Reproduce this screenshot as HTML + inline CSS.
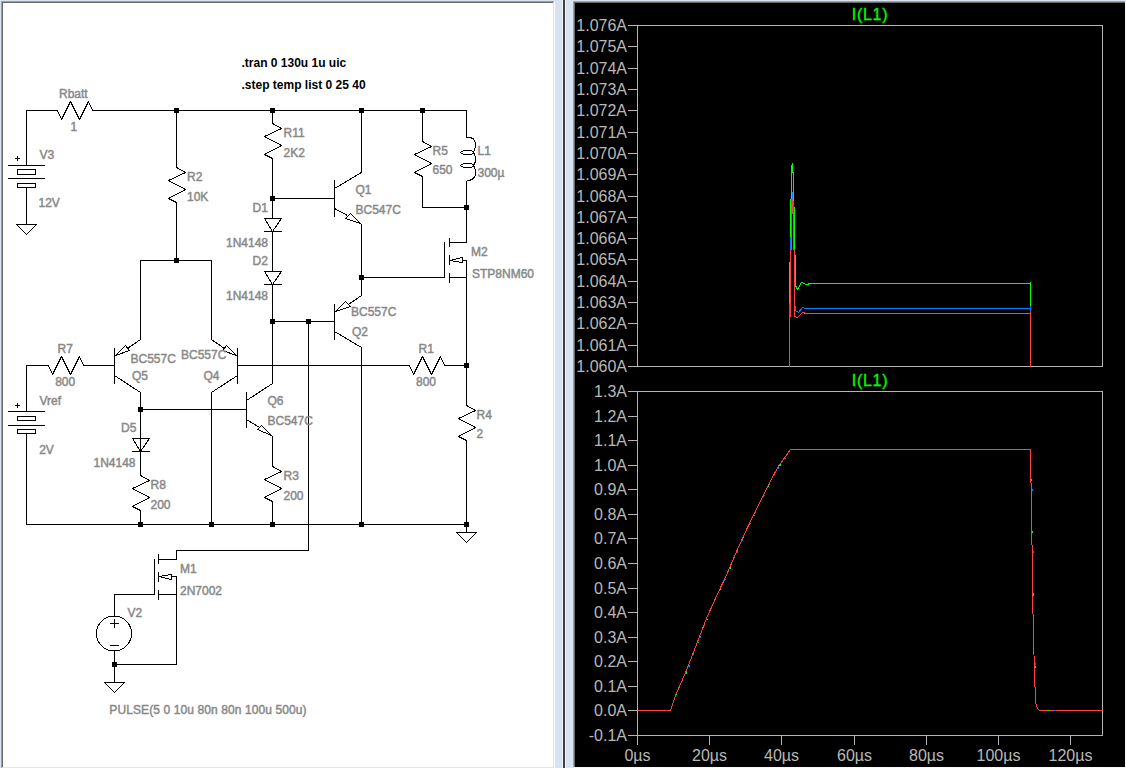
<!DOCTYPE html>
<html><head><meta charset="utf-8"><style>
html,body{margin:0;padding:0;width:1126px;height:768px;overflow:hidden;background:#d6e3f1;}
svg{position:absolute;left:0;top:0;display:block}
.lbl{font-family:"Liberation Sans",sans-serif;font-size:12px;fill:#888;stroke:#888;stroke-width:0.45px;}
.dir{font-family:"Liberation Sans",sans-serif;font-size:12px;font-weight:bold;fill:#000;}
.ax{font-family:"Liberation Sans",sans-serif;font-size:16px;fill:#b8b8b8;}
.ttl{font-family:"Liberation Sans",sans-serif;font-size:16px;fill:#00ff00;stroke:#00ff00;stroke-width:0.3px;letter-spacing:0.7px;}
</style></head><body>
<svg width="1126" height="768" viewBox="0 0 1126 768">
<defs><clipPath id="clipTop"><rect x="638" y="26" width="464" height="341"/></clipPath></defs>
<rect x="0" y="0" width="1126" height="768" fill="#d6e3f1"/>
<!-- left panel -->
<rect x="1" y="1" width="554" height="767" fill="#ffffff"/>
<rect x="1" y="1" width="553" height="1" fill="#a0a0a0"/>
<rect x="1" y="1" width="1" height="767" fill="#a0a0a0"/>
<rect x="2" y="2" width="552" height="766" fill="#e3e3e3"/>
<rect x="2" y="2" width="551" height="1" fill="#696969"/>
<rect x="2" y="2" width="1" height="765" fill="#696969"/>
<rect x="3" y="3" width="550" height="764" fill="#ffffff"/>
<!-- divider -->
<rect x="562" y="0" width="1" height="768" fill="#eef4fd"/>
<rect x="563" y="0" width="2" height="768" fill="#404040"/>
<rect x="565" y="0" width="1" height="768" fill="#eef4fd"/>
<!-- right panel -->
<rect x="573" y="1" width="553" height="767" fill="#f8f8f8"/>
<rect x="573" y="1" width="552" height="766" fill="#a0a0a0"/>
<rect x="574" y="2" width="551" height="765" fill="#696969"/>
<rect x="575" y="3" width="550" height="764" fill="#000000"/>
<g shape-rendering="crispEdges">
<rect x="26" y="110" width="1" height="56" fill="#000"/>
<rect x="26" y="110" width="32" height="1" fill="#000"/>
<path d="M57.5 110.5 L61.5 119.5 L70.5 101.5 L79.5 119.5 L88.5 101.5 L92.5 110.5" stroke="#000" fill="none" stroke-linejoin="bevel"/>
<rect x="92" y="110" width="375" height="1" fill="#000"/>
<rect x="174" y="108" width="5" height="5" fill="#000"/>
<rect x="270" y="108" width="5" height="5" fill="#000"/>
<rect x="359" y="108" width="5" height="5" fill="#000"/>
<rect x="420" y="108" width="5" height="5" fill="#000"/>
<rect x="8" y="165" width="37" height="1" fill="#000"/>
<rect x="17.5" y="169.5" width="18" height="5" fill="none" stroke="#000"/>
<rect x="8" y="178" width="37" height="1" fill="#000"/>
<rect x="17.5" y="183.5" width="18" height="4" fill="none" stroke="#000"/>
<rect x="15" y="158" width="5" height="1" fill="#000"/>
<rect x="17" y="156" width="1" height="5" fill="#000"/>
<rect x="26" y="188" width="1" height="37" fill="#000"/>
<path d="M16.5 224.5 L36.5 224.5 L26.5 234.5 Z" stroke="#000" fill="none" stroke-linejoin="bevel"/>
<rect x="176" y="110" width="1" height="58" fill="#000"/>
<path d="M176.5 167.5 L185.5 172.5 L168.5 180.5 L185.5 189.5 L168.5 198.5 L176.5 202.5" stroke="#000" fill="none" stroke-linejoin="bevel"/>
<rect x="176" y="202" width="1" height="59" fill="#000"/>
<rect x="174" y="258" width="5" height="5" fill="#000"/>
<rect x="140" y="260" width="72" height="1" fill="#000"/>
<rect x="140" y="260" width="1" height="80" fill="#000"/>
<rect x="211" y="260" width="1" height="80" fill="#000"/>
<rect x="272" y="110" width="1" height="14" fill="#000"/>
<path d="M272.5 123.5 L281.5 128.5 L264.5 136.5 L281.5 145.5 L264.5 154.5 L272.5 158.5" stroke="#000" fill="none" stroke-linejoin="bevel"/>
<rect x="272" y="158" width="1" height="61" fill="#000"/>
<rect x="270" y="196" width="5" height="5" fill="#000"/>
<rect x="272" y="198" width="63" height="1" fill="#000"/>
<rect x="264" y="218" width="18" height="1" fill="#000"/>
<path d="M264.5 218.5 L272.5 231.5" stroke="#000" fill="none" stroke-linejoin="bevel"/>
<path d="M281.5 218.5 L272.5 231.5" stroke="#000" fill="none" stroke-linejoin="bevel"/>
<rect x="264" y="231" width="18" height="1" fill="#000"/>
<rect x="272" y="231" width="1" height="41" fill="#000"/>
<rect x="264" y="271" width="18" height="1" fill="#000"/>
<path d="M264.5 271.5 L272.5 284.5" stroke="#000" fill="none" stroke-linejoin="bevel"/>
<path d="M281.5 271.5 L272.5 284.5" stroke="#000" fill="none" stroke-linejoin="bevel"/>
<rect x="264" y="284" width="18" height="1" fill="#000"/>
<rect x="272" y="284" width="1" height="100" fill="#000"/>
<rect x="270" y="319" width="5" height="5" fill="#000"/>
<rect x="272" y="321" width="63" height="1" fill="#000"/>
<rect x="306" y="319" width="5" height="5" fill="#000"/>
<rect x="308" y="321" width="1" height="230" fill="#000"/>
<rect x="176" y="550" width="133" height="1" fill="#000"/>
<rect x="334" y="180" width="1" height="37" fill="#000"/>
<path d="M334.5 188.5 L361.5 172.5" stroke="#000" fill="none" stroke-linejoin="bevel"/>
<rect x="361" y="110" width="1" height="63" fill="#000"/>
<path d="M334.5 208.5 L347.5 215.5" stroke="#000" fill="none" stroke-linejoin="bevel"/>
<path d="M350.5 213.5 L345.5 218.5 L360.5 223.5 Z" stroke="#000" fill="none" stroke-linejoin="bevel"/>
<path d="M360.5 223.5 L361.5 224.5" stroke="#000" fill="none" stroke-linejoin="bevel"/>
<rect x="361" y="224" width="1" height="72" fill="#000"/>
<rect x="359" y="275" width="5" height="5" fill="#000"/>
<rect x="361" y="277" width="84" height="1" fill="#000"/>
<rect x="334" y="304" width="1" height="36" fill="#000"/>
<path d="M348.5 304.5 L361.5 295.5" stroke="#000" fill="none" stroke-linejoin="bevel"/>
<path d="M335.5 311.5 L345.5 301.5 L350.5 306.5 Z" stroke="#000" fill="none" stroke-linejoin="bevel"/>
<path d="M334.5 331.5 L361.5 347.5" stroke="#000" fill="none" stroke-linejoin="bevel"/>
<rect x="361" y="347" width="1" height="178" fill="#000"/>
<rect x="422" y="110" width="1" height="32" fill="#000"/>
<path d="M422.5 141.5 L431.5 146.5 L414.5 154.5 L431.5 163.5 L414.5 172.5 L422.5 176.5" stroke="#000" fill="none" stroke-linejoin="bevel"/>
<rect x="422" y="176" width="1" height="32" fill="#000"/>
<rect x="422" y="207" width="45" height="1" fill="#000"/>
<rect x="464" y="205" width="5" height="5" fill="#000"/>
<rect x="466" y="110" width="1" height="28" fill="#000"/>
<path d="M466.5 137 C471 137 475.5 139 475.5 144.5 C475.5 148 474.5 150.5 473.5 152.5 C475.5 155 475.5 158 475.5 160 C475.5 162.5 474.5 164 473.5 165.5 C475.5 168 475.5 171 475.5 173 C475.5 178.5 471 180.5 466.5 180.5" stroke="#000" fill="none"/>
<path d="M473.5 152.5 L471.5 150.5 L463.5 150.5 L460.5 152.5 L463.5 154.5 L471.5 154.5 L473.5 152.5" stroke="#000" fill="none" stroke-linejoin="bevel"/>
<path d="M473.5 165.5 L471.5 163.5 L463.5 163.5 L460.5 165.5 L463.5 167.5 L471.5 167.5 L473.5 165.5" stroke="#000" fill="none" stroke-linejoin="bevel"/>
<rect x="466" y="181" width="1" height="62" fill="#000"/>
<rect x="449" y="242" width="18" height="1" fill="#000"/>
<rect x="444" y="242" width="1" height="36" fill="#000"/>
<rect x="449" y="238" width="1" height="9" fill="#000"/>
<rect x="449" y="255" width="1" height="10" fill="#000"/>
<rect x="449" y="273" width="1" height="10" fill="#000"/>
<rect x="450" y="260" width="2" height="1" fill="#000"/>
<rect x="452" y="259" width="1" height="2" fill="#000"/>
<rect x="452" y="259" width="4" height="1" fill="#000"/>
<rect x="456" y="258" width="4" height="1" fill="#000"/>
<rect x="460" y="257" width="3" height="1" fill="#000"/>
<rect x="462" y="257" width="1" height="6" fill="#000"/>
<rect x="453" y="261" width="6" height="1" fill="#000"/>
<rect x="459" y="262" width="4" height="1" fill="#000"/>
<rect x="463" y="260" width="4" height="1" fill="#000"/>
<rect x="449" y="277" width="18" height="1" fill="#000"/>
<rect x="466" y="260" width="1" height="146" fill="#000"/>
<rect x="237" y="365" width="173" height="1" fill="#000"/>
<path d="M409.5 365.5 L413.5 374.5 L422.5 356.5 L431.5 374.5 L440.5 356.5 L444.5 365.5" stroke="#000" fill="none" stroke-linejoin="bevel"/>
<rect x="444" y="365" width="23" height="1" fill="#000"/>
<rect x="464" y="363" width="5" height="5" fill="#000"/>
<rect x="26" y="365" width="23" height="1" fill="#000"/>
<path d="M48.5 365.5 L52.5 374.5 L61.5 356.5 L70.5 374.5 L79.5 356.5 L83.5 365.5" stroke="#000" fill="none" stroke-linejoin="bevel"/>
<rect x="83" y="365" width="32" height="1" fill="#000"/>
<rect x="114" y="348" width="1" height="36" fill="#000"/>
<path d="M127.5 348.5 L140.5 339.5" stroke="#000" fill="none" stroke-linejoin="bevel"/>
<path d="M115.5 355.5 L125.5 345.5 L129.5 350.5 Z" stroke="#000" fill="none" stroke-linejoin="bevel"/>
<path d="M114.5 375.5 L140.5 392.5" stroke="#000" fill="none" stroke-linejoin="bevel"/>
<rect x="140" y="392" width="1" height="84" fill="#000"/>
<rect x="138" y="407" width="5" height="5" fill="#000"/>
<rect x="140" y="409" width="107" height="1" fill="#000"/>
<rect x="237" y="348" width="1" height="36" fill="#000"/>
<path d="M224.5 348.5 L211.5 339.5" stroke="#000" fill="none" stroke-linejoin="bevel"/>
<path d="M236.5 355.5 L226.5 345.5 L222.5 350.5 Z" stroke="#000" fill="none" stroke-linejoin="bevel"/>
<path d="M237.5 375.5 L211.5 392.5" stroke="#000" fill="none" stroke-linejoin="bevel"/>
<rect x="211" y="392" width="1" height="133" fill="#000"/>
<rect x="26" y="365" width="1" height="47" fill="#000"/>
<rect x="8" y="411" width="37" height="1" fill="#000"/>
<rect x="17.5" y="416.5" width="18" height="4" fill="none" stroke="#000"/>
<rect x="8" y="425" width="37" height="1" fill="#000"/>
<rect x="17.5" y="429.5" width="18" height="4" fill="none" stroke="#000"/>
<rect x="15" y="405" width="5" height="1" fill="#000"/>
<rect x="17" y="403" width="1" height="5" fill="#000"/>
<rect x="26" y="434" width="1" height="91" fill="#000"/>
<rect x="26" y="524" width="441" height="1" fill="#000"/>
<rect x="138" y="522" width="5" height="5" fill="#000"/>
<rect x="209" y="522" width="5" height="5" fill="#000"/>
<rect x="270" y="522" width="5" height="5" fill="#000"/>
<rect x="359" y="522" width="5" height="5" fill="#000"/>
<rect x="464" y="522" width="5" height="5" fill="#000"/>
<rect x="132" y="438" width="18" height="1" fill="#000"/>
<path d="M132.5 438.5 L140.5 451.5" stroke="#000" fill="none" stroke-linejoin="bevel"/>
<path d="M149.5 438.5 L140.5 451.5" stroke="#000" fill="none" stroke-linejoin="bevel"/>
<rect x="132" y="451" width="18" height="1" fill="#000"/>
<path d="M140.5 475.5 L149.5 480.5 L132.5 488.5 L149.5 497.5 L132.5 506.5 L140.5 510.5" stroke="#000" fill="none" stroke-linejoin="bevel"/>
<rect x="140" y="510" width="1" height="15" fill="#000"/>
<rect x="246" y="392" width="1" height="36" fill="#000"/>
<path d="M246.5 400.5 L272.5 383.5" stroke="#000" fill="none" stroke-linejoin="bevel"/>
<path d="M246.5 419.5 L259.5 427.5" stroke="#000" fill="none" stroke-linejoin="bevel"/>
<path d="M261.5 425.5 L257.5 429.5 L271.5 435.5 Z" stroke="#000" fill="none" stroke-linejoin="bevel"/>
<rect x="272" y="436" width="1" height="31" fill="#000"/>
<path d="M272.5 466.5 L281.5 471.5 L264.5 479.5 L281.5 488.5 L264.5 497.5 L272.5 501.5" stroke="#000" fill="none" stroke-linejoin="bevel"/>
<rect x="272" y="501" width="1" height="24" fill="#000"/>
<path d="M466.5 405.5 L475.5 410.5 L458.5 418.5 L475.5 427.5 L458.5 436.5 L466.5 440.5" stroke="#000" fill="none" stroke-linejoin="bevel"/>
<rect x="466" y="440" width="1" height="93" fill="#000"/>
<path d="M456.5 532.5 L476.5 532.5 L466.5 542.5 Z" stroke="#000" fill="none" stroke-linejoin="bevel"/>
<rect x="176" y="550" width="1" height="10" fill="#000"/>
<rect x="158" y="559" width="19" height="1" fill="#000"/>
<rect x="154" y="559" width="1" height="36" fill="#000"/>
<rect x="114" y="594" width="41" height="1" fill="#000"/>
<rect x="158" y="554" width="1" height="10" fill="#000"/>
<rect x="158" y="572" width="1" height="10" fill="#000"/>
<rect x="158" y="590" width="1" height="10" fill="#000"/>
<rect x="159" y="576" width="3" height="1" fill="#000"/>
<rect x="162" y="575" width="6" height="1" fill="#000"/>
<rect x="168" y="574" width="4" height="1" fill="#000"/>
<rect x="171" y="574" width="1" height="6" fill="#000"/>
<rect x="161" y="577" width="4" height="1" fill="#000"/>
<rect x="165" y="578" width="4" height="1" fill="#000"/>
<rect x="169" y="579" width="3" height="1" fill="#000"/>
<rect x="172" y="576" width="5" height="1" fill="#000"/>
<rect x="176" y="576" width="1" height="89" fill="#000"/>
<rect x="158" y="594" width="19" height="1" fill="#000"/>
<rect x="114" y="664" width="63" height="1" fill="#000"/>
<rect x="112" y="662" width="5" height="5" fill="#000"/>
<rect x="114" y="594" width="1" height="23" fill="#000"/>
<circle cx="114" cy="633.5" r="17.5" fill="none" stroke="#000"/>
<rect x="110" y="623" width="9" height="1" fill="#000"/>
<rect x="114" y="619" width="1" height="9" fill="#000"/>
<rect x="110" y="645" width="9" height="1" fill="#000"/>
<rect x="114" y="651" width="1" height="32" fill="#000"/>
<path d="M104.5 682.5 L124.5 682.5 L114.5 692.5 Z" stroke="#000" fill="none" stroke-linejoin="bevel"/>
</g>
<text x="59" y="97.5" class="lbl">Rbatt</text>
<text x="70.5" y="130.5" class="lbl">1</text>
<text x="39.5" y="158.5" class="lbl">V3</text>
<text x="38.5" y="206.5" class="lbl">12V</text>
<text x="187" y="180.5" class="lbl">R2</text>
<text x="187" y="200.5" class="lbl">10K</text>
<text x="283.5" y="136.5" class="lbl">R11</text>
<text x="283.5" y="156.5" class="lbl">2K2</text>
<text x="432.5" y="154.5" class="lbl">R5</text>
<text x="432.5" y="173.5" class="lbl">650</text>
<text x="477.5" y="154.5" class="lbl">L1</text>
<text x="477.5" y="176.8" class="lbl">300µ</text>
<text x="252.5" y="211.5" class="lbl">D1</text>
<text x="226" y="246.5" class="lbl">1N4148</text>
<text x="252.5" y="264.5" class="lbl">D2</text>
<text x="226" y="299.5" class="lbl">1N4148</text>
<text x="355.5" y="193.5" class="lbl">Q1</text>
<text x="355.5" y="213.5" class="lbl">BC547C</text>
<text x="471" y="255.5" class="lbl">M2</text>
<text x="472" y="277.5" class="lbl">STP8NM60</text>
<text x="130.5" y="362.5" class="lbl">BC557C</text>
<text x="132" y="379.5" class="lbl">Q5</text>
<text x="181" y="358.5" class="lbl">BC557C</text>
<text x="203.5" y="379.5" class="lbl">Q4</text>
<text x="351" y="315.5" class="lbl">BC557C</text>
<text x="352" y="335.5" class="lbl">Q2</text>
<text x="418.5" y="352.5" class="lbl">R1</text>
<text x="416" y="385.5" class="lbl">800</text>
<text x="57.5" y="352.5" class="lbl">R7</text>
<text x="55.2" y="385.5" class="lbl">800</text>
<text x="39.5" y="404.5" class="lbl">Vref</text>
<text x="39.2" y="453.5" class="lbl">2V</text>
<text x="121" y="431.5" class="lbl">D5</text>
<text x="93.5" y="466.5" class="lbl">1N4148</text>
<text x="150.5" y="488.5" class="lbl">R8</text>
<text x="150.5" y="508.5" class="lbl">200</text>
<text x="267.5" y="404.5" class="lbl">Q6</text>
<text x="267.5" y="425" class="lbl">BC547C</text>
<text x="283.5" y="479.5" class="lbl">R3</text>
<text x="283.5" y="499.5" class="lbl">200</text>
<text x="476.5" y="418.5" class="lbl">R4</text>
<text x="476.5" y="437.5" class="lbl">2</text>
<text x="180" y="572.5" class="lbl">M1</text>
<text x="180" y="595" class="lbl">2N7002</text>
<text x="127.5" y="616.5" class="lbl">V2</text>
<text x="109.3" y="714" class="lbl" letter-spacing="0.1">PULSE(5 0 10u 80n 80n 100u 500u)</text>
<text x="241.5" y="66.5" class="dir">.tran 0 130u 1u uic</text>
<text x="241.5" y="88.5" class="dir">.step temp list 0 25 40</text>
<g shape-rendering="crispEdges">
<rect x="637" y="25" width="466" height="1" fill="#b4b4b4"/>
<rect x="637" y="366" width="466" height="1" fill="#b4b4b4"/>
<rect x="637" y="25" width="1" height="342" fill="#b4b4b4"/>
<rect x="1102" y="25" width="1" height="342" fill="#b4b4b4"/>
<rect x="628" y="25" width="9" height="1" fill="#b4b4b4"/>
<text x="627" y="31" class="ax" text-anchor="end">1.076A</text>
<rect x="628" y="46" width="9" height="1" fill="#b4b4b4"/>
<text x="627" y="52" class="ax" text-anchor="end">1.075A</text>
<rect x="628" y="68" width="9" height="1" fill="#b4b4b4"/>
<text x="627" y="74" class="ax" text-anchor="end">1.074A</text>
<rect x="628" y="89" width="9" height="1" fill="#b4b4b4"/>
<text x="627" y="95" class="ax" text-anchor="end">1.073A</text>
<rect x="628" y="110" width="9" height="1" fill="#b4b4b4"/>
<text x="627" y="116" class="ax" text-anchor="end">1.072A</text>
<rect x="628" y="132" width="9" height="1" fill="#b4b4b4"/>
<text x="627" y="138" class="ax" text-anchor="end">1.071A</text>
<rect x="628" y="153" width="9" height="1" fill="#b4b4b4"/>
<text x="627" y="159" class="ax" text-anchor="end">1.070A</text>
<rect x="628" y="174" width="9" height="1" fill="#b4b4b4"/>
<text x="627" y="180" class="ax" text-anchor="end">1.069A</text>
<rect x="628" y="196" width="9" height="1" fill="#b4b4b4"/>
<text x="627" y="202" class="ax" text-anchor="end">1.068A</text>
<rect x="628" y="217" width="9" height="1" fill="#b4b4b4"/>
<text x="627" y="223" class="ax" text-anchor="end">1.067A</text>
<rect x="628" y="238" width="9" height="1" fill="#b4b4b4"/>
<text x="627" y="244" class="ax" text-anchor="end">1.066A</text>
<rect x="628" y="259" width="9" height="1" fill="#b4b4b4"/>
<text x="627" y="265" class="ax" text-anchor="end">1.065A</text>
<rect x="628" y="281" width="9" height="1" fill="#b4b4b4"/>
<text x="627" y="287" class="ax" text-anchor="end">1.064A</text>
<rect x="628" y="302" width="9" height="1" fill="#b4b4b4"/>
<text x="627" y="308" class="ax" text-anchor="end">1.063A</text>
<rect x="628" y="323" width="9" height="1" fill="#b4b4b4"/>
<text x="627" y="329" class="ax" text-anchor="end">1.062A</text>
<rect x="628" y="345" width="9" height="1" fill="#b4b4b4"/>
<text x="627" y="351" class="ax" text-anchor="end">1.061A</text>
<rect x="628" y="366" width="9" height="1" fill="#b4b4b4"/>
<text x="627" y="372" class="ax" text-anchor="end">1.060A</text>
<rect x="637" y="391" width="466" height="1" fill="#b4b4b4"/>
<rect x="637" y="735" width="466" height="1" fill="#b4b4b4"/>
<rect x="637" y="391" width="1" height="345" fill="#b4b4b4"/>
<rect x="1102" y="391" width="1" height="345" fill="#b4b4b4"/>
<rect x="628" y="391" width="9" height="1" fill="#b4b4b4"/>
<text x="627" y="397" class="ax" text-anchor="end">1.3A</text>
<rect x="628" y="416" width="9" height="1" fill="#b4b4b4"/>
<text x="627" y="422" class="ax" text-anchor="end">1.2A</text>
<rect x="628" y="440" width="9" height="1" fill="#b4b4b4"/>
<text x="627" y="446" class="ax" text-anchor="end">1.1A</text>
<rect x="628" y="465" width="9" height="1" fill="#b4b4b4"/>
<text x="627" y="471" class="ax" text-anchor="end">1.0A</text>
<rect x="628" y="489" width="9" height="1" fill="#b4b4b4"/>
<text x="627" y="495" class="ax" text-anchor="end">0.9A</text>
<rect x="628" y="514" width="9" height="1" fill="#b4b4b4"/>
<text x="627" y="520" class="ax" text-anchor="end">0.8A</text>
<rect x="628" y="538" width="9" height="1" fill="#b4b4b4"/>
<text x="627" y="544" class="ax" text-anchor="end">0.7A</text>
<rect x="628" y="563" width="9" height="1" fill="#b4b4b4"/>
<text x="627" y="569" class="ax" text-anchor="end">0.6A</text>
<rect x="628" y="588" width="9" height="1" fill="#b4b4b4"/>
<text x="627" y="594" class="ax" text-anchor="end">0.5A</text>
<rect x="628" y="612" width="9" height="1" fill="#b4b4b4"/>
<text x="627" y="618" class="ax" text-anchor="end">0.4A</text>
<rect x="628" y="637" width="9" height="1" fill="#b4b4b4"/>
<text x="627" y="643" class="ax" text-anchor="end">0.3A</text>
<rect x="628" y="661" width="9" height="1" fill="#b4b4b4"/>
<text x="627" y="667" class="ax" text-anchor="end">0.2A</text>
<rect x="628" y="686" width="9" height="1" fill="#b4b4b4"/>
<text x="627" y="692" class="ax" text-anchor="end">0.1A</text>
<rect x="628" y="710" width="9" height="1" fill="#b4b4b4"/>
<text x="627" y="716" class="ax" text-anchor="end">0.0A</text>
<rect x="628" y="735" width="9" height="1" fill="#b4b4b4"/>
<text x="627" y="741" class="ax" text-anchor="end">-0.1A</text>
<rect x="637" y="736" width="1" height="9" fill="#b4b4b4"/>
<text x="637.5" y="760.5" class="ax" text-anchor="middle">0µs</text>
<rect x="709" y="736" width="1" height="9" fill="#b4b4b4"/>
<text x="709.5" y="760.5" class="ax" text-anchor="middle">20µs</text>
<rect x="781" y="736" width="1" height="9" fill="#b4b4b4"/>
<text x="781.5" y="760.5" class="ax" text-anchor="middle">40µs</text>
<rect x="854" y="736" width="1" height="9" fill="#b4b4b4"/>
<text x="854.5" y="760.5" class="ax" text-anchor="middle">60µs</text>
<rect x="926" y="736" width="1" height="9" fill="#b4b4b4"/>
<text x="926.5" y="760.5" class="ax" text-anchor="middle">80µs</text>
<rect x="998" y="736" width="1" height="9" fill="#b4b4b4"/>
<text x="998.5" y="760.5" class="ax" text-anchor="middle">100µs</text>
<rect x="1070" y="736" width="1" height="9" fill="#b4b4b4"/>
<text x="1070.5" y="760.5" class="ax" text-anchor="middle">120µs</text>
</g>
<text x="870" y="19.5" class="ttl" text-anchor="middle">I(L1)</text>
<text x="870" y="385.5" class="ttl" text-anchor="middle">I(L1)</text>
<g clip-path="url(#clipTop)">
<path d="M789.5 367.5 L789.5 262.5 L790.5 262.5 L790.5 199.5 L791.5 199.5 L791.5 167.5 L792.5 163.5 L792.5 172.5 L793.5 172.5 L793.5 207.5 L794.5 207.5 L794.5 247.5 L795.5 262.5 L795.5 285.5 L797.5 289.5 L801.5 282.5 L806.5 284.5 L810.5 283.5 L1030.5 283.5 L1030.5 281.5 L1030.5 367.5" stroke="#00ff00" fill="none" stroke-width="1" stroke-linejoin="bevel" shape-rendering="crispEdges"/>
<path d="M789.5 367.5 L789.5 303.5 L790.5 303.5 L790.5 237.5 L791.5 237.5 L791.5 199.5 L792.5 199.5 L792.5 192.5 L793.5 209.5 L793.5 249.5 L794.5 249.5 L794.5 300.5 L795.5 310.5 L798.5 312.5 L802.5 307.5 L805.5 308.5 L1030.5 308.5 L1030.5 305.5 L1030.5 367.5" stroke="#0080ff" fill="none" stroke-width="1" stroke-linejoin="bevel" shape-rendering="crispEdges"/>
<path d="M789.5 367.5 L789.5 316.5 L790.5 316.5 L790.5 249.5 L791.5 249.5 L791.5 208.5 L792.5 199.5 L792.5 213.5 L793.5 213.5 L793.5 249.5 L794.5 249.5 L794.5 316.5 L797.5 317.5 L802.5 312.5 L806.5 313.5 L1030.5 313.5 L1030.5 311.5 L1030.5 367.5" stroke="#ff4040" fill="none" stroke-width="1" stroke-linejoin="bevel" shape-rendering="crispEdges"/>
</g>
<path d="M637.5 710.5 L670.5 710.5 L675.5 695.5 L686.3 670.9 L696.75 643.8 L707.2 616.75 L717.6 593.8 L726.1 575.9 L735.9 553.0 L746.3 530.1 L756.75 508.2 L767.2 487.4 L777.6 467.6 L788.0 453.0 L790.5 449.5 L793.5 449.5 L1030.5 449.5 L1030.5 464.5 L1031.5 500.5 L1032.5 587.5 L1033.5 639.5 L1034.5 670.9 L1035.5 702.2 L1037.5 708.5 L1039.5 710.5 L1102.5 710.5" stroke="#ff4040" fill="none" stroke-width="1" stroke-linejoin="bevel" shape-rendering="crispEdges"/>
<path d="M676.5 695.5 L687.3 670.9 L697.75 643.8 L708.2 616.75 L718.6 593.8 L727.1 575.9 L736.9 553.0 L747.3 530.1 L757.75 508.2 L768.2 487.4 L778.6 467.6 L789.0 453.0 L791.5 449.5 L794.5 449.5" stroke="#0080ff" fill="none" stroke-width="1" stroke-dasharray="2 11 1 17" shape-rendering="crispEdges"/>
<path d="M676.5 695.5 L687.3 670.9 L697.75 643.8 L708.2 616.75 L718.6 593.8 L727.1 575.9 L736.9 553.0 L747.3 530.1 L757.75 508.2 L768.2 487.4 L778.6 467.6 L789.0 453.0 L791.5 449.5 L794.5 449.5" stroke="#00ff00" fill="none" stroke-width="1" stroke-dasharray="1 23 2 31" shape-rendering="crispEdges"/>
<path d="M1031.5 449.5 L1031.5 464.5 L1032.5 500.5 L1033.5 587.5 L1034.5 639.5 L1035.5 670.9 L1036.5 702.2 L1038.5 708.5 L1040.5 710.5 L1103.5 710.5" stroke="#0080ff" fill="none" stroke-width="1" stroke-dasharray="0 40 2 60 2 70" shape-rendering="crispEdges"/>
<path d="M1031.5 449.5 L1031.5 464.5 L1032.5 500.5 L1033.5 587.5 L1034.5 639.5 L1035.5 670.9 L1036.5 702.2 L1038.5 708.5 L1040.5 710.5 L1103.5 710.5" stroke="#00ff00" fill="none" stroke-width="1" stroke-dasharray="0 30 2 50 2 60 3 40" shape-rendering="crispEdges"/>
</svg>
</body></html>
